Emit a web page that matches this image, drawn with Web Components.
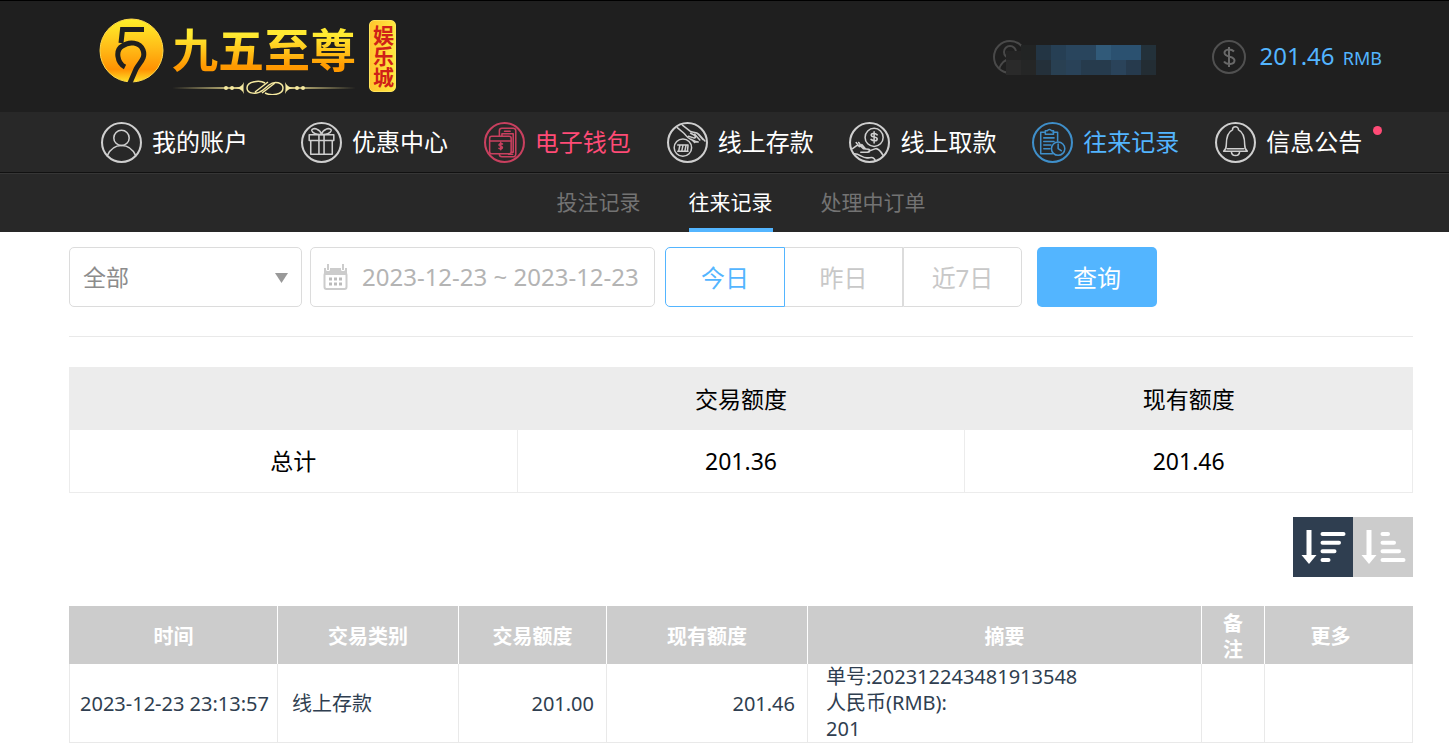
<!DOCTYPE html>
<html lang="zh-CN">
<head>
<meta charset="utf-8">
<meta name="viewport" content="width=device-width, initial-scale=1">
<title>往来记录 - 九五至尊娱乐城</title>
<style>
  :root {
    --blue: #53b5ff;
    --pink: #ff4b76;
    --dark: #1f1f1f;
    --panel: #282828;
    --edge: #dcdcdc;
    --gutter-left: 69px;
    --gutter-right: 36px;
  }
  body {
    margin: 0;
    background: #fff;
    font-family: "Noto Sans", "Noto Sans CJK SC", sans-serif;
    font-size: 20px;
    color: #000;
  }
</style>
</head>
<body>
<member-page></member-page>

<script>
const define = (name, html, setup) => {
  const template = document.createElement('template');
  template.innerHTML = html;
  customElements.define(name, class extends HTMLElement {
    constructor() {
      super();
      this.attachShadow({ mode: 'open' }).append(template.content.cloneNode(true));
    }
    connectedCallback() {
      if (setup) setup(this, this.shadowRoot);
    }
  });
};

/* Line icons for the main navigation, on a 40 x 40 grid */
const ICONS = {
  account: '<circle cx="20" cy="15.5" r="7.5"/><path d="M6 33C9 26.500 14 23 20 23s11 3.500 14 10"/>',
  gift: '<path d="M8 12.500h24v5.500H8zM9.500 18h21v13.500h-21zM17.500 12.500v19M22.500 12.500v19"/><path d="M20 12c-4 .5-9-1-9.500-3.500-.3-2 3-2.500 5-1.500C18 8 19.500 10 20 12zM20 12c4 .5 9-1 9.500-3.500.3-2-3-2.500-5-1.500C22 8 20.500 10 20 12z"/>',
  wallet: '<path d="M15 14V8.500A2.500 2.500 0 0 1 17.500 6h11A2.500 2.500 0 0 1 31 8.500v23a2.500 2.500 0 0 1-2.500 2.500h-11a2.500 2.500 0 0 1-2.500-2.500M20 9h5.500M17.500 14v-2.500h11v18H27M24 31.500h4"/><rect x="5.500" y="14" width="21" height="17" rx="2"/><path d="M5.500 18.500h21M18 21.500c-2.500-1-3.500.2-3.200 1.200.4 1.200 3.200.6 3.200 2.200 0 1.300-1.600 1.700-3.400.8M16.300 20v7"/>',
  deposit: '<circle cx="15.500" cy="25" r="8.500"/><path d="M10.500 22.500h10M10.500 28.500h10M11.500 28l1-5M14.500 28l1-5M17.500 28l1-5M20 28l.5-5"/><path d="M10 5.500l6 5c3 2.500 3 4.500 6.500 6 3 1.200 4.500 3 8 3M15 3l7.500 6c2 1.500 6 .5 8.500 3l6 6.500M21 14l5 1.500c2.500.5 2-2 0-3l-3-1.500M27 12l5 5.500M30 11.500l5 5.500M24 17l3 3"/>',
  withdraw: '<circle cx="24.500" cy="15" r="8.800"/><path d="M27.500 12.500c-2.500-2-6-1.500-5.800.5.200 2.200 5.800 1 5.800 3.500 0 2.300-4 2.300-6 .5M24.500 9.500v11"/><path d="M3.500 26l4-3c2-1.300 4 .5 6.500 3l5 .5c2 .3 1.500 3-.5 3h-7M10 24l-3-4M13 25l-3.500-5M16 26l-3.500-4M19 28.500l7-2.500c3.500-.5 6 4.500 7.500 7M5.500 31c5 0 7 4 12 4 4 0 6-2 8.500 3"/>',
  records: '<path d="M13 10H8.500v21H20M20.500 10H25v8.500M13 12V8.500h2a2.200 2.200 0 0 1 4 0h2V12zM11.500 15.500h10M11.500 19h10M11.500 22.500h7M11.500 26h6"/><circle cx="25.500" cy="26" r="6.500"/><path d="M25.500 21.500V26l3 2"/>',
  bell: '<path d="M8.500 28.500h23C29.500 27 29 25.500 29 22.500c0-7-1-12.500-6-14.800a3 3 0 0 0-6 0c-5 2.300-6 7.800-6 14.800 0 3-.5 4.500-2.500 6zM16 29c.3 5 7.700 5 8 0M12 26h16"/>'
};

define('site-logo', `
<style>
  :host { display: block; }
  a { display: flex; align-items: flex-start; text-decoration: none; }
  svg { display: block; }
  .word { margin: 8px 13px 0 7px; }
  .name {
    font-size: 46px; line-height: 46px; font-weight: 700;
    background: linear-gradient(#ffea32 20%, #ffc91c 50%, #ff9800 88%);
    -webkit-background-clip: text; background-clip: text; color: transparent;
  }
  .ornament { margin-top: 3px; }
  .seal {
    box-sizing: border-box; width: 27px; margin-top: 2px;
    border-radius: 5px; background: linear-gradient(90deg, #ffc52e, #ffe93f);
    border: 1px solid #ffe45a;
    color: #cf2118; font-size: 21px; line-height: 22px; font-weight: 700; text-align: center;
    writing-mode: vertical-rl;
    display: flex; justify-content: center; align-items: center; height: 72px;
  }
</style>
<a href="#home">
  <svg width="66" height="66" viewBox="0 0 66 66" aria-hidden="true">
    <defs><linearGradient id="g" x1="0" y1="0" x2="0" y2="1"><stop offset="0" stop-color="#fff02a"/><stop offset=".45" stop-color="#ffbd18"/><stop offset=".8" stop-color="#ff9202"/><stop offset="1" stop-color="#ffe22a"/></linearGradient></defs>
    <circle cx="32.500" cy="32.500" r="31.500" fill="url(#g)" stroke="#ffd84a"/>
    <path d="M45 11.500H23.500L22 25" fill="none" stroke="#1f1f1f" stroke-width="5"/>
    <path d="M26 49C18 45 16 32 23.500 28 30 23 41 24 44 32c3 8-3 12-7 19L30.500 66" fill="none" stroke="#1f1f1f" stroke-width="5"/>
  </svg>
  <div class="word">
    <div class="name">九五至尊</div>
    <svg class="ornament" width="184" height="20" viewBox="0 0 184 20" aria-hidden="true">
      <defs><linearGradient id="l"><stop offset="0" stop-color="#f5e9a0" stop-opacity="0"/><stop offset=".3" stop-color="#f5e9a0"/><stop offset=".7" stop-color="#f5e9a0"/><stop offset="1" stop-color="#f5e9a0" stop-opacity="0"/></linearGradient></defs>
      <path d="M0 12h184v1.500H122v-.5H64v.5H0z" fill="url(#l)" clip-path="polygon(0 0, 68px 0, 68px 20px, 118px 20px, 118px 0, 184px 0, 184px 20px, 0 20px)" opacity="0"/>
      <path d="M0 13l68-1v2zM184 13l-68-1v2z" fill="#d9cb86"/>
      <g fill="#f5e9a0"><circle cx="54" cy="13" r="2"/><circle cx="60" cy="13" r="2"/><circle cx="125" cy="13" r="2"/><circle cx="131" cy="13" r="2"/><path d="M64 13q6-1 8-6-1 6 0 12-2-5-8-6zM121 13q-6-1-8-6 1 6 0 12 2-5 8-6z"/></g>
      <path d="M93 8c-5-3-18-2-18 5 0 6 10 7 16 2l6-5c6-5 14-2 14 3 0 7-12 8-18 5M83 17l13-10M90 18l13-10" fill="none" stroke="#f5e9a0" stroke-width="1.500"/>
    </svg>
  </div>
  <div class="seal">娱乐城</div>
</a>`);

define('user-status', `
<style>
  :host { display: flex; align-items: center; }
  svg { display: block; }
  .user { margin-right: 55px; }
  .amount { margin-left: 12px; color: var(--blue); font-size: 24px; line-height: 32px; white-space: nowrap; }
  small { margin-left: 2px; font-size: 18px; }
</style>
<svg class="user" width="165" height="36" viewBox="0 0 165 36" role="img" aria-label="用户名已隐藏">
  <g fill="none" stroke="#494949" stroke-width="2"><circle cx="19" cy="18" r="16"/><circle cx="19" cy="13" r="6"/><path d="M8 30q3-9 11-10"/></g>
  <g class="cells"></g>
</svg>
<svg width="36" height="36" viewBox="0 0 36 36" aria-hidden="true">
  <g fill="none" stroke="#505050" stroke-width="2"><circle cx="18" cy="18" r="16"/><path d="M23 12.500c-3-3-10-2.500-9.500 1.500.5 5 10 2.500 10 7.500 0 4.500-8 4.500-10.500 1M18 8v20" stroke="#696969"/></g>
</svg>
<span class="amount">201.46 <small>RMB</small></span>`,
(host, root) => {
  const rows = [
    ['#242424', '#222424', '#233544', '#263f54', '#29455d', '#29455d', '#315a79', '#2b5170', '#2b5170', '#23313a'],
    ['#2a2a2a', '#252626', '#24303a', '#294052', '#294258', '#263b4d', '#263b4d', '#2a435a', '#263a4d', '#232d34']
  ];
  const ns = 'http://www.w3.org/2000/svg';
  const group = root.querySelector('.cells');
  rows.forEach((row, r) => row.forEach((fill, c) => {
    const rect = document.createElementNS(ns, 'rect');
    const attrs = { x: 15 + c * 15, y: 6 + r * 15, width: 15, height: 15, fill };
    if (c === 0 && r === 0) { attrs.y = 12; attrs.height = 9; }
    for (const key in attrs) rect.setAttribute(key, attrs[key]);
    group.append(rect);
  }));
});

define('nav-item', `
<style>
  :host { display: block; color: #fff; --line: #cfcfcf; }
  :host([tone="pink"]) { color: var(--pink); --line: #c9405f; }
  :host([tone="blue"]) { color: var(--blue); --line: #3f8fca; }
  a { position: relative; display: flex; width: max-content; align-items: center; gap: 10px; color: inherit; text-decoration: none; font-size: 24px; line-height: 32px; white-space: nowrap; }
  svg { display: block; fill: none; stroke: var(--line); stroke-width: 1.500; stroke-linejoin: round; stroke-linecap: round; }
  i { display: none; position: absolute; right: -20px; top: 4px; width: 9px; height: 9px; border-radius: 50%; background: var(--pink); }
  :host([unread]) i { display: block; }
</style>
<a href="#"><svg width="41" height="41" viewBox="0 0 40 40" aria-hidden="true"></svg><slot></slot><i></i></a>`,
(host, root) => {
  root.querySelector('svg').innerHTML = '<circle cx="20" cy="20" r="19" stroke-width="2"/>' + ICONS[host.getAttribute('icon')];
});

define('sub-tab', `
<style>
  :host { display: block; color: #737373; }
  a { box-sizing: border-box; display: block; height: 59px; padding-top: 14px; border-bottom: 4px solid transparent; color: inherit; text-decoration: none; font-size: 21px; line-height: 30px; }
  :host([active]) { color: #fff; }
  :host([active]) a { border-color: var(--blue); }
</style>
<a href="#"><slot></slot></a>`);

define('site-header', `
<style>
  :host { display: block; background: var(--dark); border-top: 1px solid #000; }
  .top { display: flex; justify-content: space-between; align-items: center; height: 111px; padding: 0 67px 0 99px; }
  nav.main { display: grid; grid-template-columns: 200px repeat(6, 1fr); align-items: center; height: 60px; padding: 0 51px 0 101px; background: var(--panel); }
  nav.sub { display: flex; justify-content: center; gap: 48px; padding: 0 var(--gutter-right) 0 var(--gutter-left); background: var(--panel); border-top: 1px solid #111; box-shadow: inset 0 1px #363636; }
</style>
<div class="top"><site-logo></site-logo><user-status></user-status></div>
<nav class="main" aria-label="会员">
  <nav-item icon="account">我的账户</nav-item>
  <nav-item icon="gift">优惠中心</nav-item>
  <nav-item icon="wallet" tone="pink">电子钱包</nav-item>
  <nav-item icon="deposit">线上存款</nav-item>
  <nav-item icon="withdraw">线上取款</nav-item>
  <nav-item icon="records" tone="blue">往来记录</nav-item>
  <nav-item icon="bell" unread>信息公告</nav-item>
</nav>
<nav class="sub" aria-label="记录">
  <sub-tab>投注记录</sub-tab>
  <sub-tab active>往来记录</sub-tab>
  <sub-tab>处理中订单</sub-tab>
</nav>`);

define('record-filter', `
<style>
  :host { display: block; padding-bottom: 29px; border-bottom: 1px solid #e9e9e9; }
  form { display: flex; height: 60px; margin: 0; }
  select, input, button { box-sizing: border-box; height: 60px; margin: 0; font: inherit; font-size: 24px; background: #fff; border: 1px solid var(--edge); border-radius: 5px; }
  .type { position: relative; width: 233px; margin-right: 8px; }
  .type select { width: 100%; appearance: none; padding: 0 13px; font-size: 23px; color: #8c8c8c; }
  .type svg { position: absolute; right: 14px; top: 26px; }
  .date { position: relative; width: 345px; margin-right: 10px; }
  .date input { width: 100%; padding: 0 0 2px 51px; color: #b4b4b4; }
  .date svg { position: absolute; left: 13px; top: 16px; }
  .range { display: flex; margin-right: 15px; }
  .range button { width: 119px; padding: 0 0 2px; border-radius: 0; color: #c8c8c8; }
  .range button:first-child { width: 120px; border-radius: 5px 0 0 5px; border-color: var(--blue); color: var(--blue); }
  .range button:nth-child(2) { width: 118px; border-left: 0; }
  .range button:last-child { border-radius: 0 5px 5px 0; }
  .go { width: 120px; padding: 0 0 2px; border: 0; background: var(--blue); color: #fff; }
</style>
<form>
  <div class="type">
    <select aria-label="交易类别"><option>全部</option></select>
    <svg width="13" height="10" viewBox="0 0 13 10" aria-hidden="true"><path d="M0 0h13L6.500 10z" fill="#999"/></svg>
  </div>
  <div class="date">
    <input type="text" aria-label="日期" value="2023-12-23 ~ 2023-12-23" readonly>
    <svg width="25" height="27" viewBox="0 0 25 27" aria-hidden="true">
      <path d="M1 5h2v2q2 3 4 0V5h11v2q2 3 4 0V5h2v7H1z" fill="#ccc"/><path d="M5 1v6M20 1v6" stroke="#ccc" stroke-width="2"/>
      <rect x="1.500" y="10" width="22" height="16" rx="2" fill="#fff" stroke="#ccc" stroke-width="2"/><path d="M1 8h23v4H1z" fill="#ccc"/>
      <path d="M6 16h3m2 0h3m2 0h3M6 21h3m2 0h3m2 0h3" stroke="#bbb" stroke-width="3"/>
    </svg>
  </div>
  <div class="range"><button type="button">今日</button><button type="button">昨日</button><button type="button">近7日</button></div>
  <button class="go" type="submit">查询</button>
</form>`,
(host, root) => root.querySelector('form').addEventListener('submit', e => e.preventDefault()));

define('summary-table', `
<style>
  :host { display: block; margin-top: 30px; }
  table { width: 100%; table-layout: fixed; border-collapse: collapse; font-size: 23px; line-height: 32px; text-align: center; }
  th, td { padding: 0; font-weight: 400; border: 1px solid #ececec; }
  thead tr { height: 62px; background: #ececec; }
  tbody tr { height: 63px; }
</style>
<table>
  <thead><tr><th></th><th scope="col">交易额度</th><th scope="col">现有额度</th></tr></thead>
  <tbody><tr><th scope="row">总计</th><td>201.36</td><td>201.46</td></tr></tbody>
</table>`);

define('sort-switch', `
<style>
  :host { display: flex; justify-content: flex-end; margin: 24px 0 29px; }
  button { width: 60px; height: 60px; padding: 0; border: 0; background: #ccc; }
  button[aria-pressed="true"] { background: #2f3e50; }
  svg { display: block; fill: none; stroke: #fff; stroke-width: 4; stroke-linecap: round; }
  .arrow { stroke-width: 5; stroke-linecap: butt; }
  .head { fill: #fff; stroke: none; }
</style>
<button type="button" aria-label="降序" aria-pressed="true"><svg width="60" height="60" viewBox="0 0 60 60"><path class="arrow" d="M16 13v27"/><path class="head" d="M8.500 38H23.500L16 47z"/><path d="M29.500 17H50.500M29.500 25.700H46M29.500 34.300H41.500M29.500 43H35.500"/></svg></button>
<button type="button" aria-label="升序" aria-pressed="false"><svg width="60" height="60" viewBox="0 0 60 60"><path class="arrow" d="M16 13v27"/><path class="head" d="M8.500 38H23.500L16 47z"/><path d="M29.500 17H35M29.500 25.700H41M29.500 34.300H46M29.500 43H50.500"/></svg></button>`);

define('record-table', `
<style>
  :host { display: block; }
  table { width: 100%; table-layout: fixed; border-collapse: collapse; font-size: 20px; line-height: 26px; }
  th { height: 55px; padding: 3px 20px 0; background: #ccc; color: #fff; font-weight: 700; border-right: 1px solid #fff; }
  th:first-child { border-left: 1px solid #ccc; }
  th:last-child { border-right-color: #ccc; padding-right: 36px; }
  td { height: 76px; padding: 2px 0 0; border: 1px solid #e9e9e9; border-top: 0; color: #2f3e50; }
  td.time { padding-left: 10px; white-space: nowrap; }
  td.kind { padding-left: 14px; }
  td.num { padding-right: 12px; text-align: right; }
  td.memo { padding: 0 0 0 18px; }
</style>
<table>
  <colgroup><col style="width:208px"><col style="width:181px"><col style="width:148px"><col style="width:201px"><col><col style="width:63px"><col style="width:148px"></colgroup>
  <thead><tr><th scope="col">时间</th><th scope="col">交易类别</th><th scope="col">交易额度</th><th scope="col">现有额度</th><th scope="col">摘要</th><th scope="col">备注</th><th scope="col">更多</th></tr></thead>
  <tbody><tr><td class="time">2023-12-23 23:13:57</td><td class="kind">线上存款</td><td class="num">201.00</td><td class="num">201.46</td><td class="memo">单号:202312243481913548<br>人民币(RMB):<br>201</td><td></td><td></td></tr></tbody>
</table>`);

define('member-page', `
<style>
  :host { display: block; }
  main { padding: 15px var(--gutter-right) 0 var(--gutter-left); }
</style>
<site-header></site-header>
<main>
  <record-filter></record-filter>
  <summary-table></summary-table>
  <sort-switch></sort-switch>
  <record-table></record-table>
</main>`);
</script>
</body>
</html>
